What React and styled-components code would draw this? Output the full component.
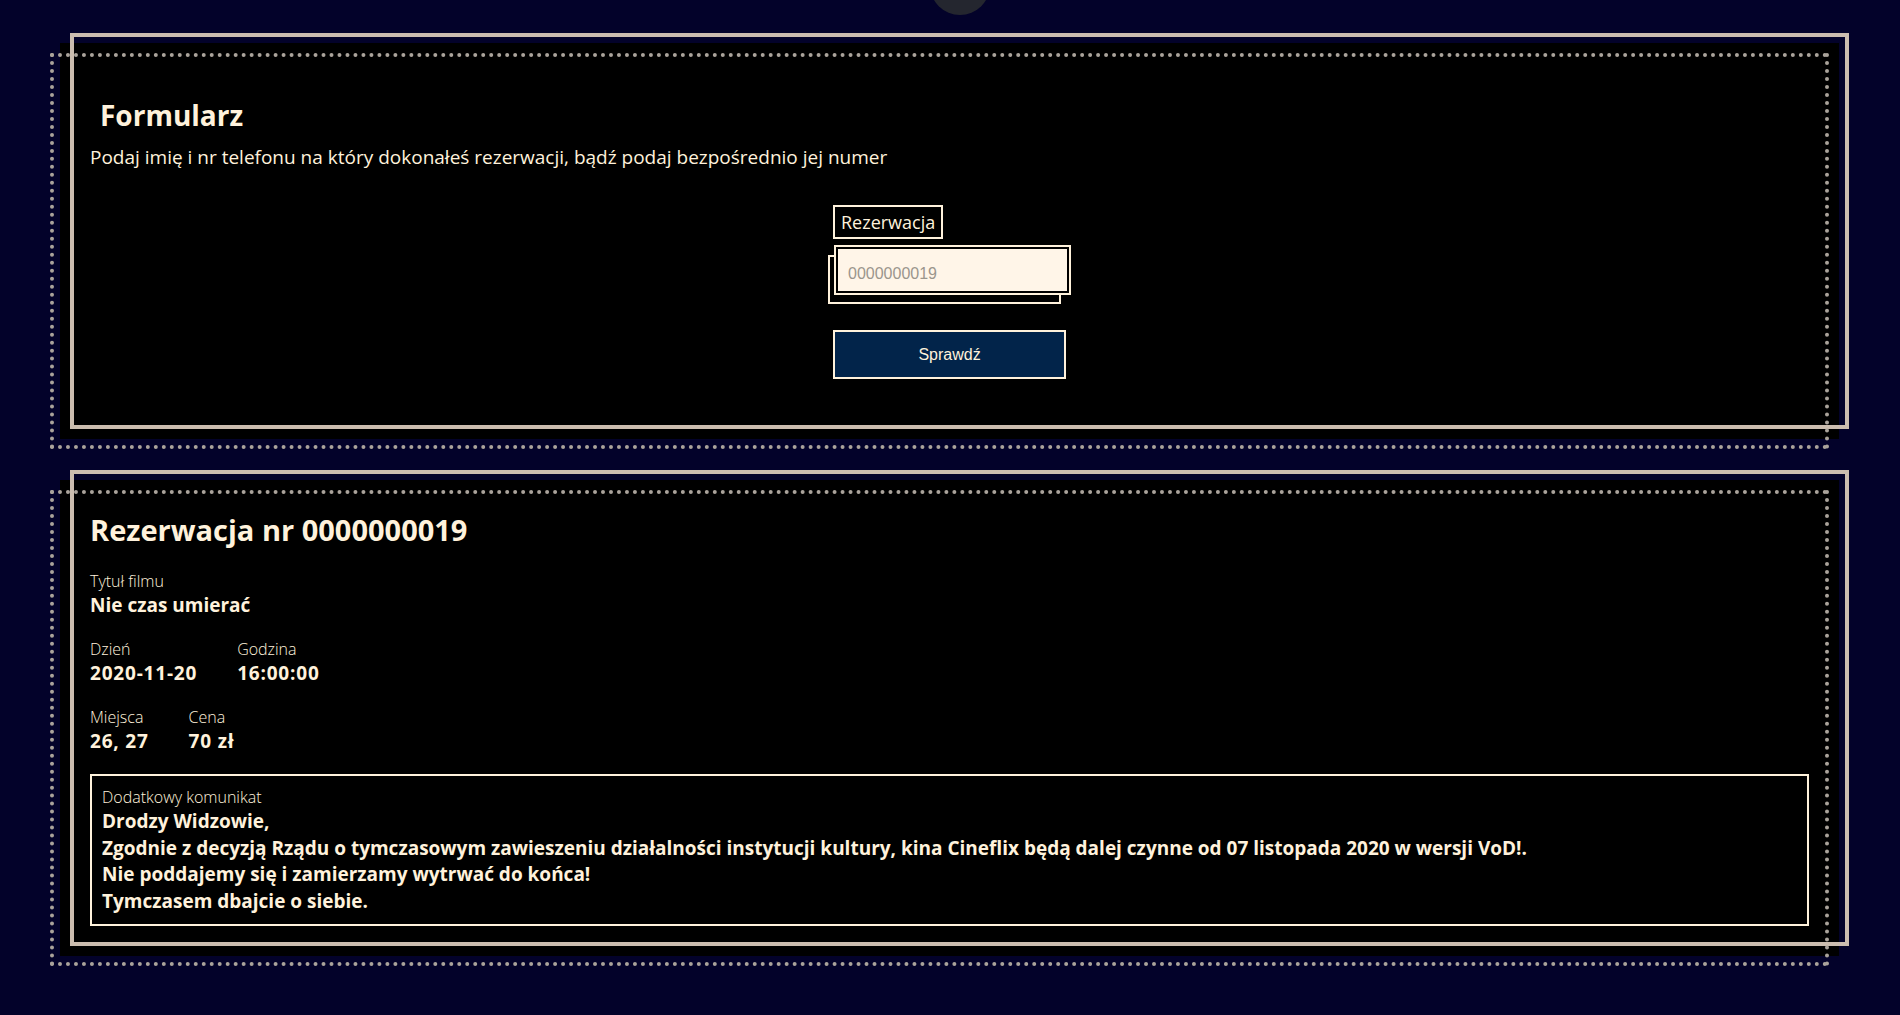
import React from "react";
import styled, { createGlobalStyle } from "styled-components";

/* ────── COLOURS ────── */
const CREAM = "#fff2dc";
const BEIGE = "#cbbdaf";
const DOTS = "#aaa39b";

const GlobalStyle = createGlobalStyle`
  html, body {
    margin: 0;
    background: #03022a;
  }
  body {
    font-family: "Open Sans", "Noto Sans", sans-serif;
    color: ${CREAM};
  }
`;

/* ────── PAGE ────── */
const Page = styled.main`
  position: relative;
  min-height: 1015px;
  box-sizing: border-box;
  padding: 43px 61px 40px 60px;
  display: flex;
  flex-direction: column;
  gap: 41px;
  overflow: hidden;
`;

const TopButton = styled.div`
  position: absolute;
  top: -45px;
  left: 930px;
  width: 60px;
  height: 60px;
  border-radius: 50%;
  background: #24262f;
`;

/* ────── CARD ────── */
const Card = styled.section`
  position: relative;
  background: #000;
  padding: 30px;

  &::before,
  &::after {
    content: "";
    position: absolute;
    inset: 0;
    pointer-events: none;
  }

  &::before {
    border: 4px solid ${BEIGE};
    transform: translate(10px, -10px);
  }

  &::after {
    border: 4px dotted ${DOTS};
    transform: translate(-10px, 10px);
  }
`;

const Heading = styled.h2`
  margin: ${(p) => (p.$indent ? "22px 0 10px 10px" : "0 0 21px")};
  font-size: ${(p) => (p.$indent ? "28px" : "29px")};
  line-height: 40px;
  font-weight: 700;
`;

const Lead = styled.p`
  margin: 0;
  font-size: 19px;
  line-height: 24px;
`;

/* ────── FORM ────── */
const Form = styled.form`
  width: 233px;
  margin: 36px auto 30px;
  display: flex;
  flex-direction: column;
  align-items: flex-start;
`;

const FieldLabel = styled.label`
  box-sizing: border-box;
  height: 34px;
  padding: 0 6px;
  border: 2px solid ${CREAM};
  font-size: 18px;
  line-height: 30px;
`;

const InputWrap = styled.div`
  position: relative;
  margin: 6px 0 0 1px;

  &::before {
    content: "";
    position: absolute;
    left: -6px;
    top: 10px;
    width: 233px;
    height: 49px;
    box-sizing: border-box;
    border: 2px solid ${CREAM};
  }
`;

const Input = styled.input`
  position: relative;
  display: block;
  box-sizing: border-box;
  width: 237px;
  height: 50px;
  padding: 7px 12px 0;
  border: 2px solid ${CREAM};
  background: #fff5e8;
  box-shadow: inset 0 0 0 2px #000;
  font-family: "Liberation Sans", Arial, sans-serif;
  font-size: 16px;
  color: #333;
  outline: none;

  &::placeholder {
    color: #9b958d;
  }
`;

const Button = styled.button`
  box-sizing: border-box;
  width: 233px;
  height: 49px;
  margin-top: 35px;
  border: 2px solid ${CREAM};
  background: #02244a;
  color: ${CREAM};
  font-family: "Liberation Sans", Arial, sans-serif;
  font-size: 16px;
  cursor: pointer;
`;

/* ────── RESERVATION ────── */
const Field = styled.div`
  display: flex;
  flex-direction: column;
`;

const Row = styled.div`
  display: flex;
  gap: 40px;
  margin-bottom: ${(p) => p.$gap || "20px"};
`;

const Caption = styled.span`
  font-size: 16px;
  line-height: 21px;
  font-weight: 300;
`;

const Value = styled.strong`
  font-size: 19px;
  line-height: 27px;
  font-weight: 700;
  letter-spacing: ${(p) => (p.$num ? "0.8px" : "0")};
`;

const Notice = styled.div`
  border: 2px solid ${CREAM};
  padding: 10px;
`;

const NoticeText = styled.div`
  font-size: 19px;
  line-height: 26.6px;
  font-weight: 700;
`;

const Item = ({ label, value, num }) => (
  <Field>
    <Caption>{label}</Caption>
    <Value $num={num}>{value}</Value>
  </Field>
);

export default function App() {
  return (
    <>
      <GlobalStyle />
      <Page>
        <TopButton />
        <Card>
          <Heading $indent>Formularz</Heading>
          <Lead>
            Podaj imię i nr telefonu na który dokonałeś rezerwacji, bądź podaj
            bezpośrednio jej numer
          </Lead>
          <Form onSubmit={(e) => e.preventDefault()}>
            <FieldLabel htmlFor="nr">Rezerwacja</FieldLabel>
            <InputWrap>
              <Input id="nr" placeholder="0000000019" />
            </InputWrap>
            <Button type="submit">Sprawdź</Button>
          </Form>
        </Card>

        <Card>
          <Heading>Rezerwacja nr 0000000019</Heading>
          <Row>
            <Item label="Tytuł filmu" value="Nie czas umierać" />
          </Row>
          <Row>
            <Item label="Dzień" value="2020-11-20" num />
            <Item label="Godzina" value="16:00:00" num />
          </Row>
          <Row $gap="19px">
            <Item label="Miejsca" value="26, 27" num />
            <Item label="Cena" value="70 zł" num />
          </Row>
          <Notice>
            <Caption>Dodatkowy komunikat</Caption>
            <NoticeText>
              Drodzy Widzowie,
              <br />
              Zgodnie z decyzją Rządu o tymczasowym zawieszeniu działalności
              instytucji kultury, kina Cineflix będą dalej czynne od 07
              listopada 2020 w wersji VoD!.
              <br />
              Nie poddajemy się i zamierzamy wytrwać do końca!
              <br />
              Tymczasem dbajcie o siebie.
            </NoticeText>
          </Notice>
        </Card>
      </Page>
    </>
  );
}
